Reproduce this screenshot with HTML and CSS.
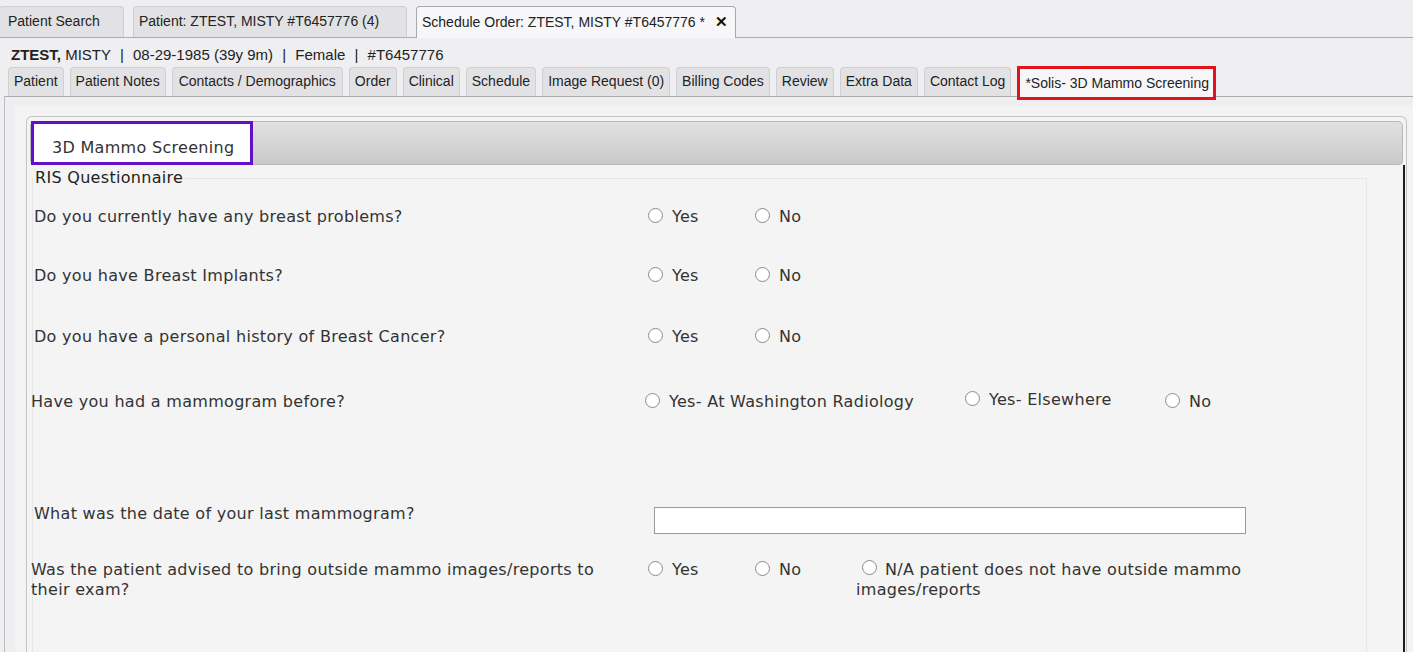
FILE: index.html
```html
<!DOCTYPE html>
<html>
<head>
<meta charset="utf-8">
<link rel="stylesheet" href="styles.css">
</head>
<body>
<div class="top-tabs">
  <div class="ttab t1">Patient Search</div>
  <div class="ttab t2">Patient: ZTEST, MISTY #T6457776 (4)</div>
  <div class="ttab t3 active">Schedule Order: ZTEST, MISTY #T6457776 * <span class="close">✕</span></div>
</div>
<div class="patient-line"><b>ZTEST,</b> MISTY <span class="sep">|</span> 08-29-1985 (39y 9m) <span class="sep">|</span> Female <span class="sep">|</span> #T6457776</div>
<div class="sub-tabs">
  <div class="stab">Patient</div>
  <div class="stab">Patient Notes</div>
  <div class="stab wide">Contacts / Demographics</div>
  <div class="stab">Order</div>
  <div class="stab">Clinical</div>
  <div class="stab">Schedule</div>
  <div class="stab">Image Request (0)</div>
  <div class="stab">Billing Codes</div>
  <div class="stab">Review</div>
  <div class="stab">Extra Data</div>
  <div class="stab">Contact Log</div>
  <div class="stab selected">*Solis- 3D Mammo Screening</div>
</div>
<div class="sub-panel">
  <div class="pane">
    <div class="widget">
      <div class="widget-head">
        <div class="wtab">3D Mammo Screening</div>
      </div>
      <div class="widget-body">
        <fieldset class="ris">
          <legend>RIS Questionnaire</legend>
          <div class="row r1">
            <div class="q">Do you currently have any breast problems?</div>
            <div class="ans">
              <label class="opt w107"><span class="radio"></span>Yes</label>
              <label class="opt"><span class="radio"></span>No</label>
            </div>
          </div>
          <div class="row r2">
            <div class="q">Do you have Breast Implants?</div>
            <div class="ans">
              <label class="opt w107"><span class="radio"></span>Yes</label>
              <label class="opt"><span class="radio"></span>No</label>
            </div>
          </div>
          <div class="row r3">
            <div class="q">Do you have a personal history of Breast Cancer?</div>
            <div class="ans">
              <label class="opt w107"><span class="radio"></span>Yes</label>
              <label class="opt"><span class="radio"></span>No</label>
            </div>
          </div>
          <div class="row r4 shift">
            <div class="q">Have you had a mammogram before?</div>
            <div class="ans ans-wide">
              <label class="opt w320"><span class="radio"></span>Yes- At Washington Radiology</label>
              <label class="opt w200 up"><span class="radio"></span>Yes- Elsewhere</label>
              <label class="opt"><span class="radio"></span>No</label>
            </div>
          </div>
          <div class="row r5">
            <div class="q">What was the date of your last mammogram?</div>
            <div class="ans"><input class="date" type="text"></div>
          </div>
          <div class="row r6 shift">
            <div class="q q-wrap">Was the patient advised to bring outside mammo images/reports to their exam?</div>
            <div class="ans">
              <label class="opt w107"><span class="radio"></span>Yes</label>
              <label class="opt w101"><span class="radio"></span>No</label>
              <label class="opt na"><span class="radio"></span>N/A patient does not have outside mammo images/reports</label>
            </div>
          </div>
        </fieldset>
      </div>
    </div>
  </div>
</div>
</body>
</html>
```
FILE: styles.css
```css
html, body {
  margin: 0;
  height: 652px;
  overflow: hidden;
}
body {
  background: #efeff2;
  font-family: "Liberation Sans", Arial, sans-serif;
  color: #222;
}
.top-tabs {
  display: flex;
  align-items: flex-end;
  height: 37px;
  border-bottom: 1px solid #adadb0;
}
.ttab {
  box-sizing: border-box;
  height: 31px;
  background: #e2e2e5;
  border: 1px solid #cfcfd2;
  border-bottom: none;
  border-radius: 4px 4px 0 0;
  font-size: 14px;
  line-height: 29px;
  padding: 0 8px;
  margin-right: 9px;
  white-space: nowrap;
  overflow: hidden;
}
.t1 { width: 125px; margin-left: -1px; }
.t2 { width: 274px; padding-left: 5px; }
.t3 { width: 320px; margin-right: 0; }
.ttab.active {
  height: 32px;
  margin-bottom: -1px;
  background: #f7f7f9;
  border-color: #a9a9ad;
  padding-left: 5px;
  line-height: 30px;
}
.close {
  font-weight: bold;
  font-size: 15px;
  margin-left: 6px;
  color: #111;
}
.patient-line {
  font-size: 15px;
  padding: 8px 0 0 11px;
  height: 21px;
  line-height: 17px;
}
.patient-line .sep { margin: 0 5px; }
.sub-tabs {
  display: flex;
  align-items: flex-end;
  padding-left: 8px;
  height: 29px;
  gap: 6px;
}
.stab {
  box-sizing: border-box;
  height: 29px;
  background: #e2e2e5;
  border: 1px solid #d0d0d3;
  border-bottom: none;
  border-radius: 4px 4px 0 0;
  font-size: 14px;
  line-height: 27px;
  padding: 0 5px;
  white-space: nowrap;
}
.stab.wide { padding: 0 6px; }
.stab.selected {
  height: 34px;
  margin-bottom: -4px;
  background: #f7f7f9;
  border: 3px solid #e2141b;
  border-radius: 0;
  line-height: 28px;
  padding: 0 4px 0 5px;
  position: relative;
}
.sub-panel {
  margin-left: 4px;
  border-top: 1px solid #adadb0;
  border-left: 1px solid #bdbdc0;
  padding: 9px 0 0 10px;
}
.pane {
  background: #f3f3f4;
  padding: 10px 0 0 11px;
}
.widget {
  width: 1381px;
  box-sizing: border-box;
  border: 1px solid #c4c4c4;
  border-bottom: none;
  border-radius: 6px 6px 0 0;
  background: #f4f4f4;
  padding: 4px 3px 0 3px;
}
.widget-head {
  display: flex;
  height: 44px;
  box-sizing: border-box;
  background: linear-gradient(#e1e1e1, #c9c9c9);
  border: 1px solid #b9b9b9;
  border-radius: 5px 5px 4px 4px;
}
.wtab {
  box-sizing: border-box;
  width: 222px;
  height: 44px;
  margin: -1px 0 0 0;
  background: #fff;
  border: 3px solid #6410c8;
  font-family: "DejaVu Sans", Verdana, sans-serif;
  font-size: 16px;
  letter-spacing: 0.3px;
  color: #333;
  padding: 14px 0 0 18px;
  line-height: 20px;
}
.widget-body {
  border-right: 2px solid #1c1c1c;
  margin-right: -2px;
  height: 500px;
  padding: 4px 36px 0 2px;
}
.ris {
  margin: 0;
  padding: 0;
  border: 1px solid #e6e6e6;
  height: 600px;
  font-family: "DejaVu Sans", Verdana, sans-serif;
  font-size: 16px;
  letter-spacing: 0.3px;
  color: #333;
}
.ris legend {
  padding: 0 2px;
  line-height: 18px;
  color: #222;
}
.row {
  display: flex;
  align-items: flex-start;
  padding-left: 1px;
}
.row.shift { margin-left: -3px; }
.row.shift .ans { margin-left: 3px; }
.row.shift .ans-wide { margin-left: 0; }
.q {
  box-sizing: border-box;
  width: 613px;
  line-height: 20px;
}
.q-wrap { padding-right: 20px; }
.ans {
  display: flex;
  align-items: flex-start;
}
.opt {
  display: flex;
  align-items: center;
  line-height: 20px;
}
.radio {
  box-sizing: border-box;
  width: 15px;
  height: 15px;
  border: 1px solid #8e8e8e;
  border-radius: 50%;
  background: radial-gradient(circle, #fff 55%, #f0f0f0);
  margin: -4px 9px 0 1px;
  flex: none;
}
.w107 { width: 107px; }
.w101 { width: 101px; }
.w320 { width: 320px; }
.w200 { width: 200px; }
.up { margin-top: -2px; }
.na {
  display: block;
  width: 392px;
  margin-left: 1px;
}
.na .radio {
  display: inline-block;
  vertical-align: middle;
  margin: -6px 8px 0 6px;
}
.r1 { margin-top: 20px; }
.r2 { margin-top: 39px; }
.r3 { margin-top: 41px; }
.r4 { margin-top: 45px; }
.r5 { margin-top: 92px; }
.r6 { margin-top: 26px; }
.date {
  box-sizing: border-box;
  width: 592px;
  height: 27px;
  margin: 3px 0 0 7px;
  border: 1px solid #9a9a9a;
  background: #fff;
  border-radius: 0;
  padding: 0;
}
```
